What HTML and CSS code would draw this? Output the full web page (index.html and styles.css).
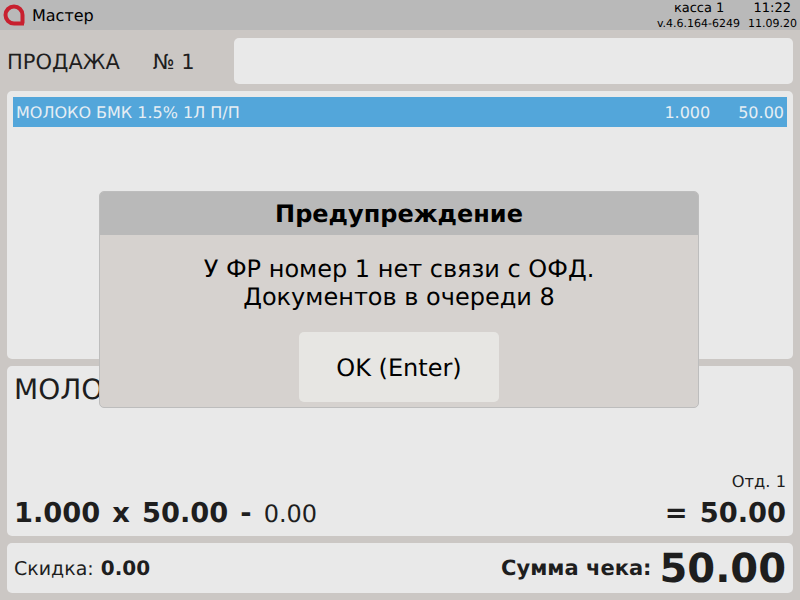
FILE: index.html
```html
<!DOCTYPE html>
<html lang="ru">

<head>
    <meta charset="UTF-8">
    <title>Мастер</title>
    <link rel="stylesheet" href="styles.css">
</head>

<body>
    <header class="topbar">
        <svg class="logo" width="22" height="22" viewBox="0 0 22 22">
            <path d="M21 19.500H11A8.500 8.500 0 1 1 19.500 11V19.500" fill="none" stroke="#c8202f" stroke-width="4" />
        </svg>
        <span class="topbar-title">Мастер</span>
        <div class="topbar-info">
            <div class="info-row">
                <span class="info-kassa">касса 1</span>
                <span class="info-time">11:22</span>
            </div>
            <div class="info-row info-small">
                <span>v.4.6.164-6249</span>
                <span>11.09.20</span>
            </div>
        </div>
    </header>

    <main class="content">
        <section class="sale-row">
            <div class="sale-title">
                <span>ПРОДАЖА</span>
                <span>№ 1</span>
            </div>
            <div class="panel sale-input"></div>
        </section>

        <section class="panel list">
            <div class="list-row">
                <span class="list-name">МОЛОКО БМК 1.5% 1Л П/П</span>
                <span class="list-qty">1.000</span>
                <span class="list-sum">50.00</span>
            </div>
        </section>

        <section class="panel item">
            <div class="item-name">МОЛОКО БМК</div>
            <div class="item-dept">Отд. 1</div>
            <div class="item-calc">
                <b>1.000</b>
                <b>x</b>
                <b>50.00</b>
                <b>-</b>
                <span>0.00</span>
                <b class="item-total">=</b>
                <b>50.00</b>
            </div>
        </section>

        <section class="panel summary">
            <span class="discount">Скидка: <b>0.00</b></span>
            <b class="total-label">Сумма чека:</b>
            <b class="total-value">50.00</b>
        </section>
    </main>

    <div class="modal">
        <div class="modal-title">Предупреждение</div>
        <div class="modal-body">
            <p class="modal-text">У ФР номер 1 нет связи с ОФД.<br>Документов в очереди 8</p>
            <button class="modal-button">OK (Enter)</button>
        </div>
    </div>
</body>

</html>
```
FILE: styles.css
```css
html,
body {
    margin: 0;
    height: 600px;
    overflow: hidden;
}

body {
    background: #cbc7c4;
    color: #1e1e1e;
    font-family: "DejaVu Sans", sans-serif;
    text-rendering: geometricPrecision;
}

.topbar {
    height: 30px;
    background: #b9b9b9;
    display: flex;
    align-items: center;
    padding: 0 3px;
    color: #000;
}

.logo {
    margin-right: 7px;
}

.topbar-title {
    font-size: 16px;
}

.topbar-info {
    margin-left: auto;
    font-size: 11px;
    line-height: 15px;
    padding-top: 2px;
}

.info-row {
    display: flex;
    justify-content: space-between;
}

.info-kassa {
    font-size: 13px;
    margin-left: 17px;
}

.info-time {
    font-size: 13px;
    margin-right: 6px;
}

.info-small {
    gap: 8px;
}

.content {
    padding: 8px 7px 7px;
    display: flex;
    flex-direction: column;
    gap: 7px;
}

.panel {
    background: #e9e9e9;
    border-radius: 5px;
}

.sale-row {
    display: flex;
    height: 46px;
}

.sale-title {
    width: 227px;
    display: flex;
    align-items: center;
    gap: 33px;
    font-size: 21px;
    padding-top: 2px;
    box-sizing: border-box;
}

.sale-input {
    flex: 1;
}

.list {
    height: 262px;
    padding: 6px 6px 0;
}

.list-row {
    height: 30px;
    background: #53a6da;
    color: #e6eef4;
    display: flex;
    align-items: center;
    padding: 0 3px;
    font-size: 16px;
}

.list-name {
    flex: 1;
}

.list-sum {
    margin-left: 28px;
}

.item {
    height: 170px;
    padding: 0 7px;
    display: flex;
    flex-direction: column;
}

.item-name {
    font-size: 28px;
    line-height: 48px;
}

.item-dept {
    margin-top: auto;
    text-align: right;
    font-size: 16.300px;
    line-height: 18px;
}

.item-calc {
    display: flex;
    align-items: baseline;
    gap: 12px;
    font-size: 27.300px;
    line-height: 38px;
    margin-top: 4px;
    margin-bottom: 3px;
}

.item-calc span {
    font-size: 24px;
}

.item-total {
    margin-left: auto;
}

.summary {
    height: 50px;
    padding: 0 7px;
    display: flex;
    align-items: center;
}

.discount {
    font-size: 19px;
    margin-right: auto;
}

.discount b {
    font-size: 20px;
    margin-left: 1px;
}

.total-label {
    font-size: 21px;
    margin-right: 8px;
}

.total-value {
    font-size: 40px;
    padding-top: 2px;
}

/* warning dialog lies over the page */
.modal {
    position: absolute;
    left: 99px;
    top: 191px;
    width: 600px;
    height: 217px;
    box-sizing: border-box;
    border: 1px solid #bdbdbd;
    border-radius: 5px;
    background: #d6d2cf;
    color: #000;
    overflow: hidden;
}

.modal-title {
    height: 43px;
    background: #b9b9b9;
    text-align: center;
    font-size: 24px;
    font-weight: bold;
    line-height: 44px;
}

.modal-body {
    text-align: center;
}

.modal-text {
    margin: 0;
    padding-top: 20px;
    font-size: 24px;
    line-height: 28px;
}

.modal-button {
    display: block;
    width: 200px;
    height: 70px;
    margin: 21px auto 0;
    padding: 2px 0 0;
    border: 0;
    border-radius: 5px;
    background: #e7e6e3;
    color: #000;
    font-family: inherit;
    font-size: 24px;
    text-rendering: geometricPrecision;
}
```
